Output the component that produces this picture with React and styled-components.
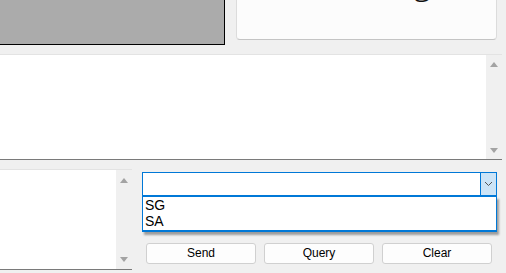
import React from "react";
import styled, { createGlobalStyle } from "styled-components";

const Global = createGlobalStyle`
  html, body {
    margin: 0;
    padding: 0;
    background: #f0f0f0;
    overflow: hidden;
  }
  body {
    font-family: "Liberation Sans", Arial, sans-serif;
  }
`;

const Wrap = styled.div`
  width: 506px;
  height: 273px;
  background: #f0f0f0;
  display: flex;
  flex-direction: column;
  overflow: hidden;
`;

const TopRow = styled.div`
  display: flex;
  align-items: flex-start;
  height: 45px;
`;

const Preview = styled.div`
  width: 224px;
  height: 44px;
  background: #ababab;
  border-right: 1px solid #000;
  border-bottom: 1px solid #000;
`;

const Card = styled.div`
  margin-left: 11px;
  width: 259px;
  height: 39px;
  background: #fcfcfc;
  border: 1px solid #dcdcdc;
  border-top: none;
  border-bottom-color: #c4c4c4;
  border-radius: 0 0 4px 4px;
  position: relative;
  overflow: hidden;
`;

const BigText = styled.div`
  position: absolute;
  left: 176px;
  top: -36px;
  font-family: "Liberation Serif", "Times New Roman", serif;
  font-size: 36px;
  line-height: 36px;
  color: #111;
`;

const LogBox = styled.div`
  margin-top: 9px;
  width: 502px;
  height: 104px;
  background: #fff;
  border-top: 1px solid #e3e3e3;
  border-bottom: 1px solid #7a7a7a;
  display: flex;
  justify-content: flex-end;
`;

const Scroll = styled.div`
  width: 16px;
  background: #f0f0f0;
  display: flex;
  flex-direction: column;
  justify-content: space-between;
  align-items: center;
  padding: ${(p) => p.$pad || "7px 0 6px"};
`;

const Arrow = styled.div`
  width: 0;
  height: 0;
  border-left: 4px solid transparent;
  border-right: 4px solid transparent;
  ${(p) =>
    p.$down
      ? "border-top: 5px solid #a3a3a3;"
      : "border-bottom: 5px solid #a3a3a3;"}
`;

const BottomRow = styled.div`
  margin-top: 9px;
  display: flex;
  align-items: flex-start;
`;

const InputBox = styled.div`
  width: 132px;
  height: 99px;
  background: #fff;
  border-top: 1px solid #e3e3e3;
  border-bottom: 1px solid #7a7a7a;
  display: flex;
  justify-content: flex-end;
`;

const Side = styled.div`
  margin-left: 10px;
  width: 355px;
  display: flex;
  flex-direction: column;
  padding-top: 3px;
  position: relative;
`;

const Combo = styled.div`
  height: 22px;
  border: 1px solid #0078d7;
  border-bottom-width: 2px;
  background: #fff;
  display: flex;
  justify-content: flex-end;
`;

const DropBtn = styled.div`
  width: 15px;
  background: #cce4f7;
  border-left: 1px solid #0078d7;
  display: flex;
  align-items: center;
  justify-content: center;
`;

const List = styled.ul`
  position: absolute;
  left: 0;
  top: 27px;
  width: 353px;
  margin: 0;
  padding: 0 0 1px;
  list-style: none;
  background: #fff;
  border: 1px solid #0078d7;
  border-bottom-width: 2px;
  box-shadow: 2px 3px 2px rgba(0, 0, 0, 0.35);
  z-index: 2;
`;

const Item = styled.li`
  font-size: 14px;
  line-height: 16px;
  height: 16px;
  padding-left: 2px;
  color: #000;
`;

const Buttons = styled.div`
  margin-top: 46px;
  margin-left: 4px;
  display: flex;
  gap: 8px;
`;

const Button = styled.button`
  width: 110px;
  height: 21px;
  padding: 0 0 1px;
  background: #fdfdfd;
  border: 1px solid #d0d0d0;
  border-radius: 3px;
  font-family: "Liberation Sans", Arial, sans-serif;
  font-size: 12px;
  color: #000;
`;

export default function App() {
  return (
    <Wrap>
      <Global />
      <TopRow>
        <Preview />
        <Card>
          <BigText>g</BigText>
        </Card>
      </TopRow>

      <LogBox>
        <Scroll>
          <Arrow />
          <Arrow $down />
        </Scroll>
      </LogBox>

      <BottomRow>
        <InputBox>
          <Scroll $pad="8px 0 7px">
            <Arrow />
            <Arrow $down />
          </Scroll>
        </InputBox>

        <Side>
          <Combo>
            <DropBtn>
              <svg width="9" height="6" viewBox="0 0 9 6">
                <path d="M1 1l3.5 3.5L8 1" fill="none" stroke="#555" strokeWidth="1" />
              </svg>
            </DropBtn>
          </Combo>
          <List>
            <Item>SG</Item>
            <Item>SA</Item>
          </List>
          <Buttons>
            <Button>Send</Button>
            <Button>Query</Button>
            <Button>Clear</Button>
          </Buttons>
        </Side>
      </BottomRow>
    </Wrap>
  );
}
